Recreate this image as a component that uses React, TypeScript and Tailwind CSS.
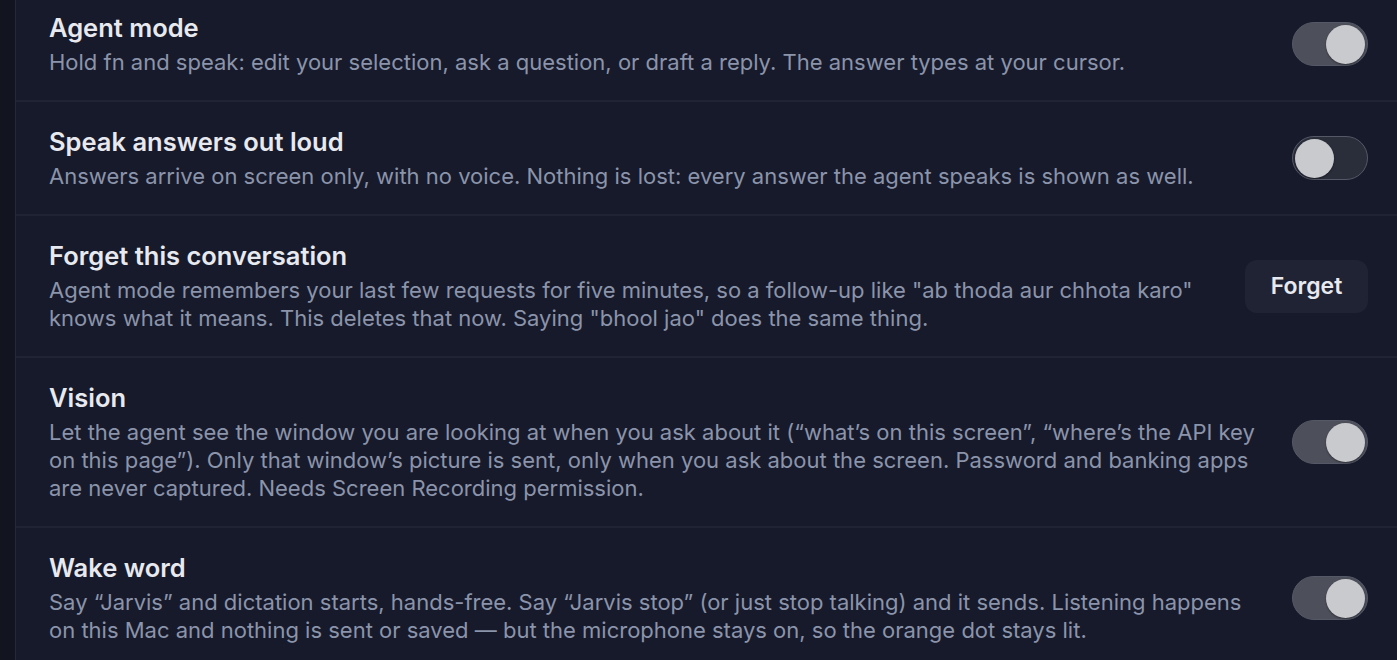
import React from "react";

type Row = {
  title: string;
  desc: string;
  control: "on" | "off" | "forget";
};

const rows: Row[] = [
  {
    title: "Agent mode",
    desc: "Hold fn and speak: edit your selection, ask a question, or draft a reply. The answer types at your cursor.",
    control: "on",
  },
  {
    title: "Speak answers out loud",
    desc: "Answers arrive on screen only, with no voice. Nothing is lost: every answer the agent speaks is shown as well.",
    control: "off",
  },
  {
    title: "Forget this conversation",
    desc: 'Agent mode remembers your last few requests for five minutes, so a follow-up like "ab thoda aur chhota karo" knows what it means. This deletes that now. Saying "bhool jao" does the same thing.',
    control: "forget",
  },
  {
    title: "Vision",
    desc: "Let the agent see the window you are looking at when you ask about it (\u201cwhat\u2019s on this screen\u201d, \u201cwhere\u2019s the API key on this page\u201d). Only that window\u2019s picture is sent, only when you ask about the screen. Password and banking apps are never captured. Needs Screen Recording permission.",
    control: "on",
  },
  {
    title: "Wake word",
    desc: "Say \u201cJarvis\u201d and dictation starts, hands-free. Say \u201cJarvis stop\u201d (or just stop talking) and it sends. Listening happens on this Mac and nothing is sent or saved \u2014 but the microphone stays on, so the orange dot stays lit.",
    control: "on",
  },
];

function Toggle({ on }: { on: boolean }) {
  return (
    <div
      className={`flex h-[44px] w-[76px] shrink-0 items-center rounded-full border border-[#555867] p-[2px] ${
        on ? "justify-end bg-[#4d4f5b]" : "justify-start bg-[#2a2d3a]"
      }`}
    >
      <div className="h-[39px] w-[39px] rounded-full bg-[#c9cace] shadow-[0_1px_2px_rgba(0,0,0,0.4)]" />
    </div>
  );
}

export default function App() {
  return (
    <div
      className="flex h-[660px] w-full overflow-hidden bg-[#171a2a]"
      style={{ fontFamily: "Inter, 'Noto Sans', sans-serif" }}
    >
      {/* sidebar edge */}
      <div className="w-[16px] shrink-0 border-r border-[#252838] bg-[#121520]" />

      <div className="-mt-[12px] flex flex-1 flex-col">
        {rows.map((row) => (
          <div
            key={row.title}
            className="flex items-center gap-7 border-b-2 border-[#202334] py-6 pl-[33px] pr-[29px]"
          >
            <div className="flex-1">
              <div className="text-[25.5px] leading-8 font-semibold text-[#e7e9ef]">{row.title}</div>
              <div className="mt-1 text-[22px] leading-7 text-[#8b94aa]">{row.desc}</div>
            </div>
            {row.control === "forget" ? (
              <button className="h-[53px] w-[123px] shrink-0 rounded-xl bg-[#1f2334] text-[23px] font-semibold text-[#e7e9ef]">
                Forget
              </button>
            ) : (
              <Toggle on={row.control === "on"} />
            )}
          </div>
        ))}
      </div>
    </div>
  );
}
